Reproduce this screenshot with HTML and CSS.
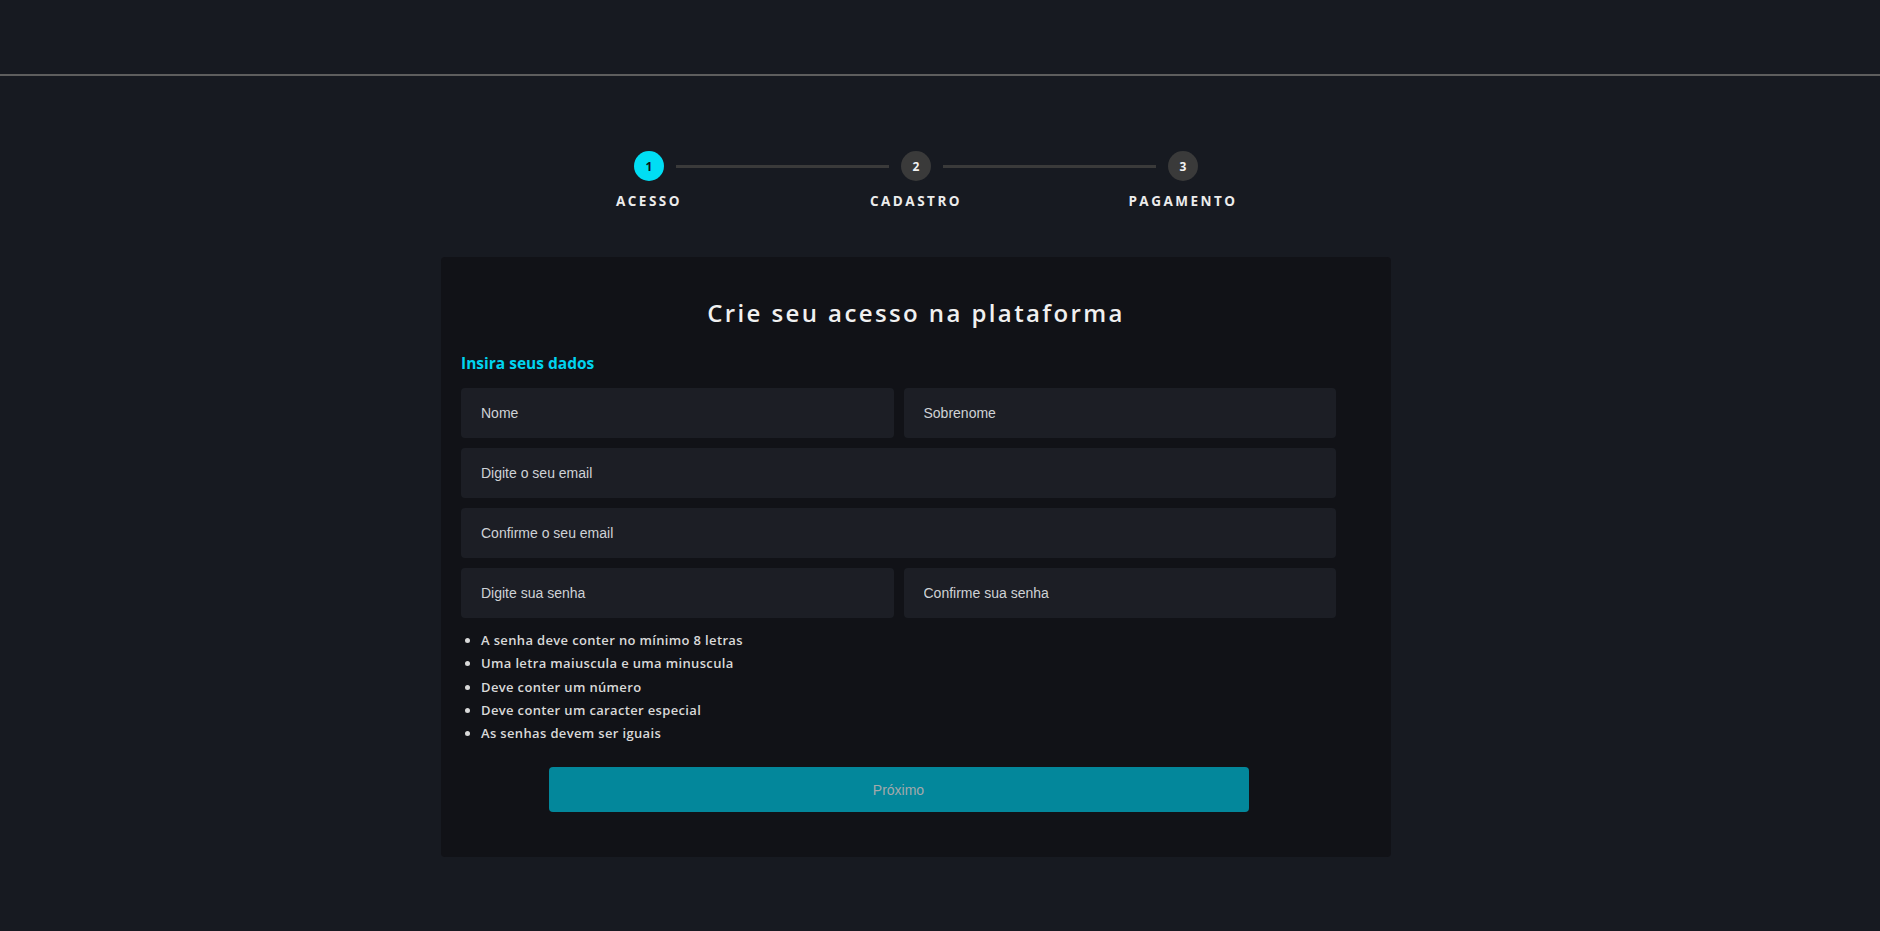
FILE: index.html
```html
<!DOCTYPE html>
<html lang="pt-BR">
<head>
<meta charset="utf-8">
<title>Crie seu acesso</title>
<link rel="stylesheet" href="styles.css">
</head>
<body>
<header class="topbar"></header>
<main class="page">
  <div class="content">
    <div class="stepper">
      <div class="stepper-track">
        <span class="step-dot active">1</span>
        <span class="step-line"></span>
        <span class="step-dot">2</span>
        <span class="step-line"></span>
        <span class="step-dot">3</span>
      </div>
      <div class="stepper-labels">
        <span class="step-label">ACESSO</span>
        <span class="step-label">CADASTRO</span>
        <span class="step-label">PAGAMENTO</span>
      </div>
    </div>

    <section class="card">
      <h1 class="card-title">Crie seu acesso na plataforma</h1>
      <form class="form">
        <h2 class="form-subtitle">Insira seus dados</h2>
        <div class="row two">
          <input class="field" type="text" placeholder="Nome">
          <input class="field" type="text" placeholder="Sobrenome">
        </div>
        <div class="row">
          <input class="field" type="email" placeholder="Digite o seu email">
        </div>
        <div class="row">
          <input class="field" type="email" placeholder="Confirme o seu email">
        </div>
        <div class="row two">
          <input class="field" type="password" placeholder="Digite sua senha">
          <input class="field" type="password" placeholder="Confirme sua senha">
        </div>
        <ul class="rules">
          <li>A senha deve conter no mínimo 8 letras</li>
          <li>Uma letra maiuscula e uma minuscula</li>
          <li>Deve conter um número</li>
          <li>Deve conter um caracter especial</li>
          <li>As senhas devem ser iguais</li>
        </ul>
        <button class="btn-next" type="button">Próximo</button>
      </form>
    </section>
  </div>
</main>
</body>
</html>
```

FILE: styles.css
```css
* {
  box-sizing: border-box;
}

html, body {
  margin: 0;
  padding: 0;
}

body {
  background: #171a21;
  font-family: "Open Sans", "DejaVu Sans", sans-serif;
  color: #e6e6e6;
  min-height: 931px;
}

.topbar {
  height: 76px;
  border-bottom: 2px solid #5e5e5e;
}

.page {
  padding-right: 48px;
}

.content {
  display: flex;
  flex-direction: column;
  align-items: center;
}

/* Stepper */
.stepper {
  margin-top: 75px;
  display: flex;
  flex-direction: column;
  align-items: center;
}

.stepper-track {
  display: flex;
  align-items: center;
}

.step-dot {
  width: 30px;
  height: 30px;
  border-radius: 50%;
  background: #3a3a3a;
  color: #f2f2f2;
  font-size: 12px;
  font-weight: 700;
  display: flex;
  align-items: center;
  justify-content: center;
}

.step-dot.active {
  background: #00def4;
  color: #0d0f14;
}

.step-line {
  width: 213px;
  height: 3px;
  margin: 0 12px;
  background: #3a3a3a;
}

.stepper-labels {
  margin-top: 10px;
  display: grid;
  grid-template-columns: repeat(3, 267px);
}

.step-label {
  text-align: center;
  font-size: 13.5px;
  font-weight: 700;
  letter-spacing: 2.5px;
  line-height: 20px;
  color: #ececec;
}

/* Card */
.card {
  margin-top: 46px;
  width: 950px;
  background: #111217;
  border-radius: 4px;
  padding: 40px 55px 45px 20px;
}

.card-title {
  margin: 0 -35px 0 0;
  text-align: center;
  font-size: 24px;
  font-weight: 600;
  letter-spacing: 2.4px;
  line-height: 32px;
  color: #f0f0f0;
}

.form {
  display: flex;
  flex-direction: column;
}

.form-subtitle {
  margin: 24px 0 15px;
  font-size: 15.5px;
  font-weight: 700;
  line-height: 20px;
  color: #00d4ef;
}

.row {
  display: flex;
  gap: 10px;
  margin-bottom: 10px;
}

.row.two .field {
  flex: 1 1 0;
}

.field {
  width: 100%;
  height: 50px;
  border: none;
  outline: none;
  border-radius: 4px;
  background: #1c1e25;
  padding: 0 20px;
  font-family: "Liberation Sans", Arial, sans-serif;
  font-size: 14px;
  color: #d6d8dc;
}

.field::placeholder {
  color: #cfd2d6;
}

.rules {
  margin: 1px 0 0;
  padding-left: 20px;
  font-size: 13px;
  font-weight: 600;
  letter-spacing: 0.35px;
  line-height: 23.3px;
  color: #d9d9d9;
}

.btn-next {
  margin: 22px auto 0;
  width: 700px;
  height: 45px;
  border: none;
  border-radius: 4px;
  background: #03879b;
  color: #a3a9ab;
  font-family: "Liberation Sans", Arial, sans-serif;
  font-size: 14px;
}
```
